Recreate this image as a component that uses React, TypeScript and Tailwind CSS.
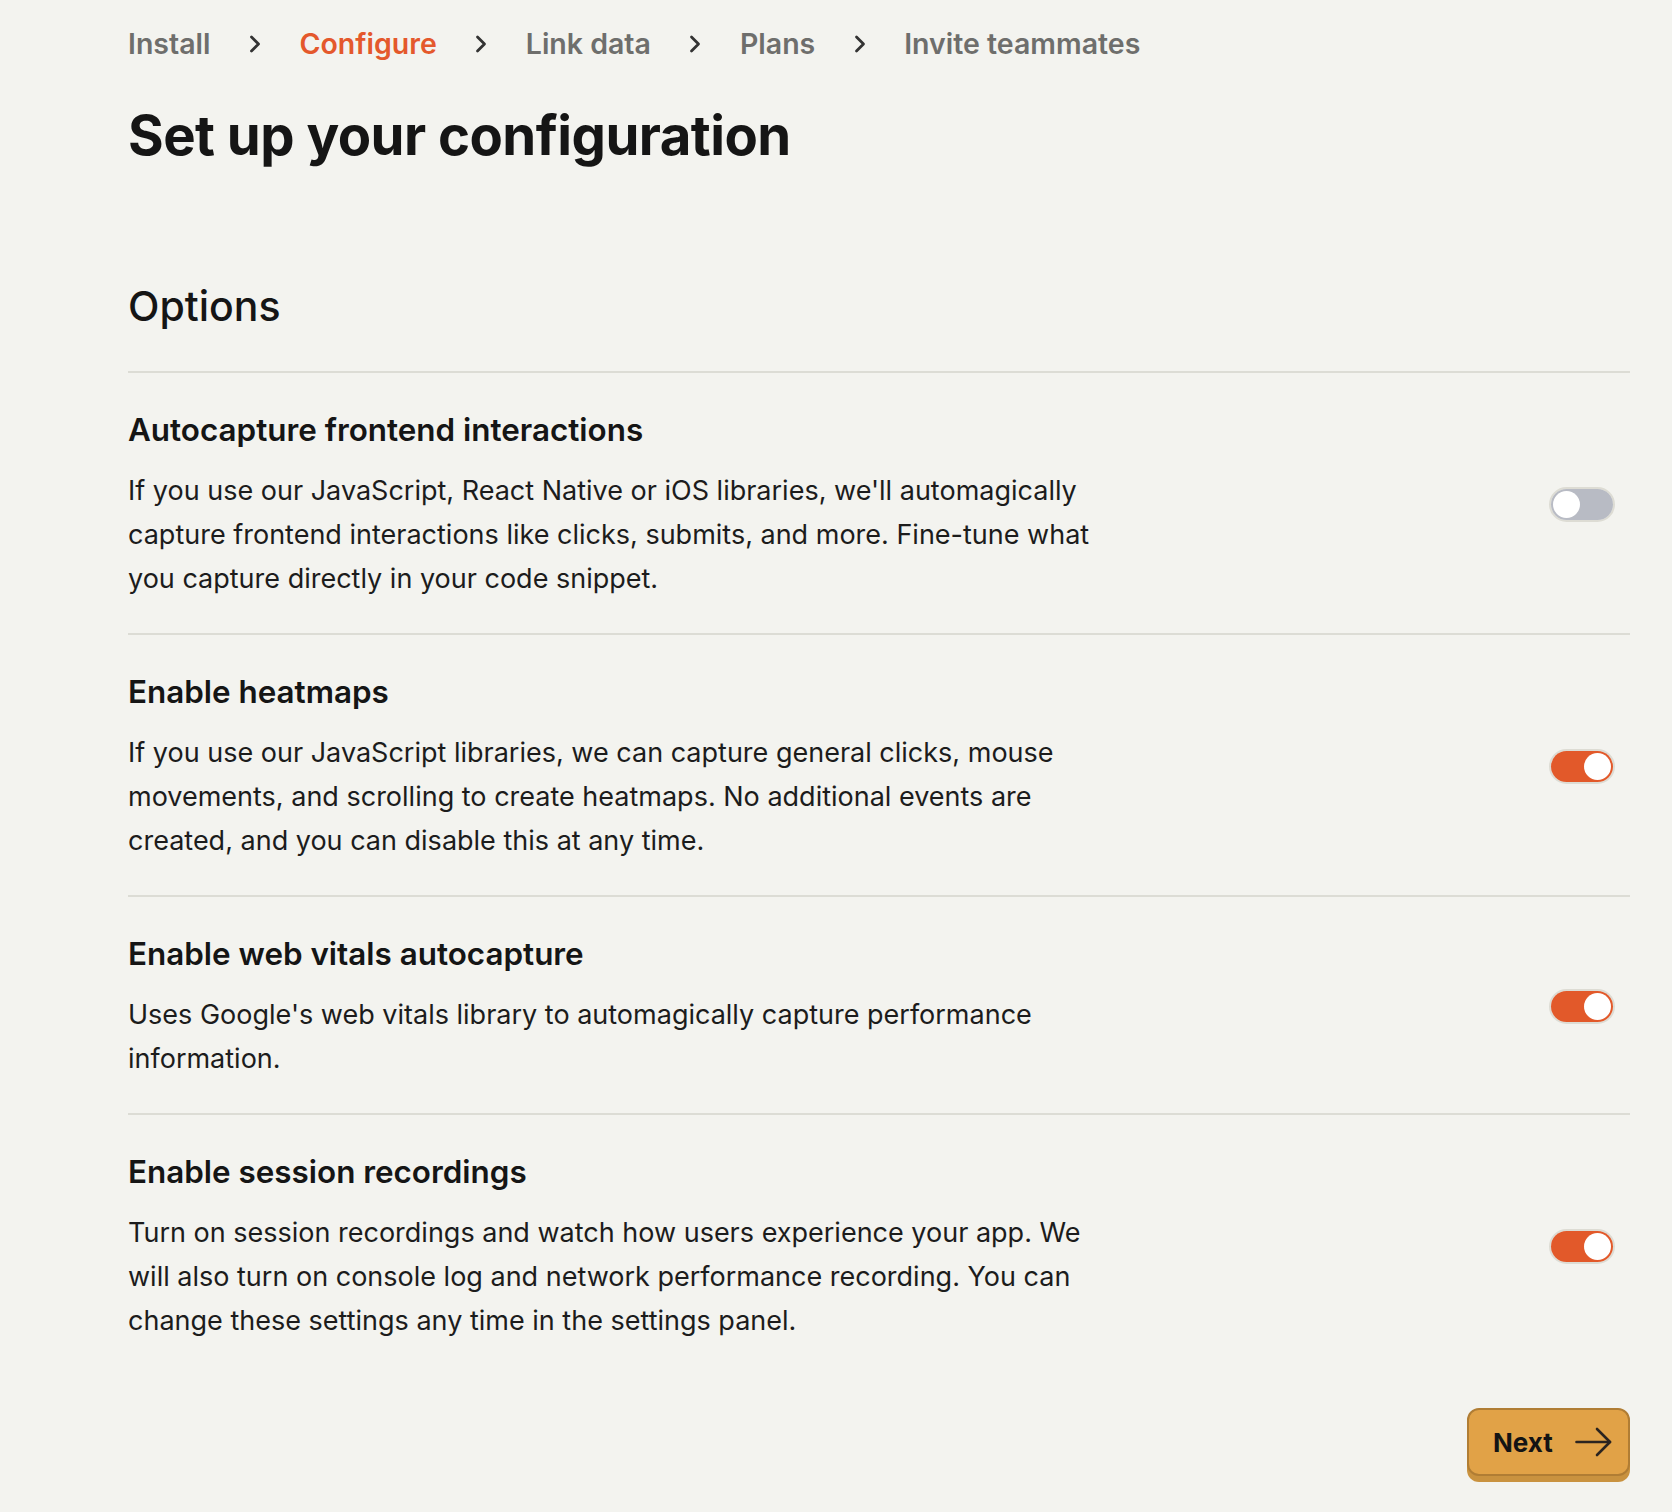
// Onboarding: tela de configuração das opções do produto
import React, { useState } from 'react';
import { ChevronRight } from 'lucide-react';

type Opcao = {
  id: string;
  titulo: string;
  descricao: string;
  ativo: boolean;
};

const passos = ['Install', 'Configure', 'Link data', 'Plans', 'Invite teammates'];

const opcoesIniciais: Opcao[] = [
  {
    id: 'autocapture',
    titulo: 'Autocapture frontend interactions',
    descricao:
      "If you use our JavaScript, React Native or iOS libraries, we'll automagically capture frontend interactions like clicks, submits, and more. Fine-tune what you capture directly in your code snippet.",
    ativo: false,
  },
  {
    id: 'heatmaps',
    titulo: 'Enable heatmaps',
    descricao:
      'If you use our JavaScript libraries, we can capture general clicks, mouse movements, and scrolling to create heatmaps. No additional events are created, and you can disable this at any time.',
    ativo: true,
  },
  {
    id: 'webvitals',
    titulo: 'Enable web vitals autocapture',
    descricao: "Uses Google's web vitals library to automagically capture performance information.",
    ativo: true,
  },
  {
    id: 'recordings',
    titulo: 'Enable session recordings',
    descricao:
      'Turn on session recordings and watch how users experience your app. We will also turn on console log and network performance recording. You can change these settings any time in the settings panel.',
    ativo: true,
  },
];

function Toggle({ ativo, onClick }: { ativo: boolean; onClick: () => void }) {
  return (
    <button
      onClick={onClick}
      className="rounded-full border-2 border-[#dddcd4] p-0"
    >
      <div
        className={`flex items-center w-[62px] h-[31px] rounded-full px-[2px] ${
          ativo ? 'bg-[#e2592a] justify-end' : 'bg-[#b8bbc4] justify-start'
        }`}
      >
        <div className="w-[27px] h-[27px] rounded-full bg-white" />
      </div>
    </button>
  );
}

export default function App() {
  const [opcoes, setOpcoes] = useState(opcoesIniciais);

  const alternar = (id: string) =>
    setOpcoes((lista) => lista.map((o) => (o.id === id ? { ...o, ativo: !o.ativo } : o)));

  return (
    <div
      className="min-h-screen bg-[#f3f3ef] text-[#151515] pl-[128px] pr-[42px] pt-[27px] pb-[31px]"
      style={{ fontFamily: 'Inter, "Noto Sans", sans-serif' }}
    >
      {/* Breadcrumb dos passos */}
      <div className="flex items-center h-[34px] text-[28.5px] font-semibold">
        {passos.map((passo, i) => (
          <React.Fragment key={passo}>
            {i > 0 && (
              <ChevronRight className="mx-[30.5px] text-[#333]" size={28} strokeWidth={2.4} />
            )}
            <span className={passo === 'Configure' ? 'text-[#e4582c]' : 'text-[#6e6e6c]'}>
              {passo}
            </span>
          </React.Fragment>
        ))}
      </div>

      <h1 className="mt-[42px] text-[54.5px] leading-[64px] font-bold tracking-[-0.01em]">
        Set up your configuration
      </h1>

      <h2 className="mt-[115px] text-[41px] leading-[48px] font-medium">Options</h2>

      {/* Lista de opções */}
      <div className="mt-[41px]">
        {opcoes.map((opcao) => (
          <div
            key={opcao.id}
            className="flex items-center justify-between pt-[39px] pb-[32px] border-t-2 border-[#dcdcd5]"
          >
            <div className="w-[988px]">
              <h3 className="text-[31.4px] leading-[36px] font-semibold">{opcao.titulo}</h3>
              <p className="mt-[21px] text-[27px] leading-[44px] text-[#1c1c1c]">{opcao.descricao}</p>
            </div>
            <div className="mr-[15px] mb-[3px]">
              <Toggle ativo={opcao.ativo} onClick={() => alternar(opcao.id)} />
            </div>
          </div>
        ))}
      </div>

      <div className="flex justify-end mt-[33px]">
        <button className="flex items-center gap-[22px] h-[68px] w-[163px] pl-[24px] rounded-[12px] border-2 border-[#b07d34] bg-[#e1a247] shadow-[0_6px_0_#c9923f] text-[26px] font-bold text-[#141414]">
          Next
          <svg width="37" height="30" viewBox="0 0 37 30" fill="none" stroke="#2b2420" strokeWidth="2.6" strokeLinecap="round" strokeLinejoin="round">
            <path d="M1.5 15H35" />
            <path d="M22 2L35 15L22 28" />
          </svg>
        </button>
      </div>
    </div>
  );
}
